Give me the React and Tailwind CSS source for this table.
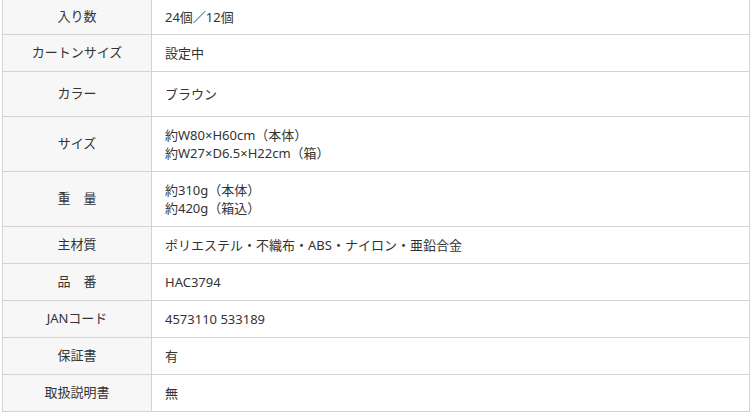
import React from 'react';

const rows = [
  { label: '入り数', value: ['24個／12個'], h: 'h-[35px]' },
  { label: 'カートンサイズ', value: ['設定中'], h: 'h-[37px]' },
  { label: 'カラー', value: ['ブラウン'], h: 'h-[45px]' },
  { label: 'サイズ', value: ['約W80×H60cm（本体）', '約W27×D6.5×H22cm（箱）'], h: 'h-[55px]' },
  { label: '重　量', value: ['約310g（本体）', '約420g（箱込）'], h: 'h-[55px]' },
  { label: '主材質', value: ['ポリエステル・不織布・ABS・ナイロン・亜鉛合金'], h: 'h-[37px]' },
  { label: '品　番', value: ['HAC3794'], h: 'h-[37px]' },
  { label: 'JANコード', value: ['4573110 533189'], h: 'h-[37px]' },
  { label: '保証書', value: ['有'], h: 'h-[37px]' },
  { label: '取扱説明書', value: ['無'], h: 'h-[37px]' },
];

export default function App() {
  return (
    <div className="w-[751px] h-[416px] bg-white overflow-hidden font-['Noto_Sans','Noto_Sans_CJK_JP',sans-serif] text-[13px] text-[#333]">
      <div className="ml-[2px] w-[748px] border-l border-r border-[#d3d3d3]">
        {rows.map((row) => (
          <div key={row.label} className={`flex border-b border-[#d3d3d3] ${row.h}`}>
            <div className="w-[149px] shrink-0 flex items-center justify-center bg-[#f7f7f7] border-r border-[#d3d3d3] whitespace-pre">
              {row.label}
            </div>
            <div className="flex-1 flex flex-col justify-center pl-[13px] leading-[18px]">
              {row.value.map((line) => (
                <span key={line}>{line}</span>
              ))}
            </div>
          </div>
        ))}
      </div>
    </div>
  );
}
